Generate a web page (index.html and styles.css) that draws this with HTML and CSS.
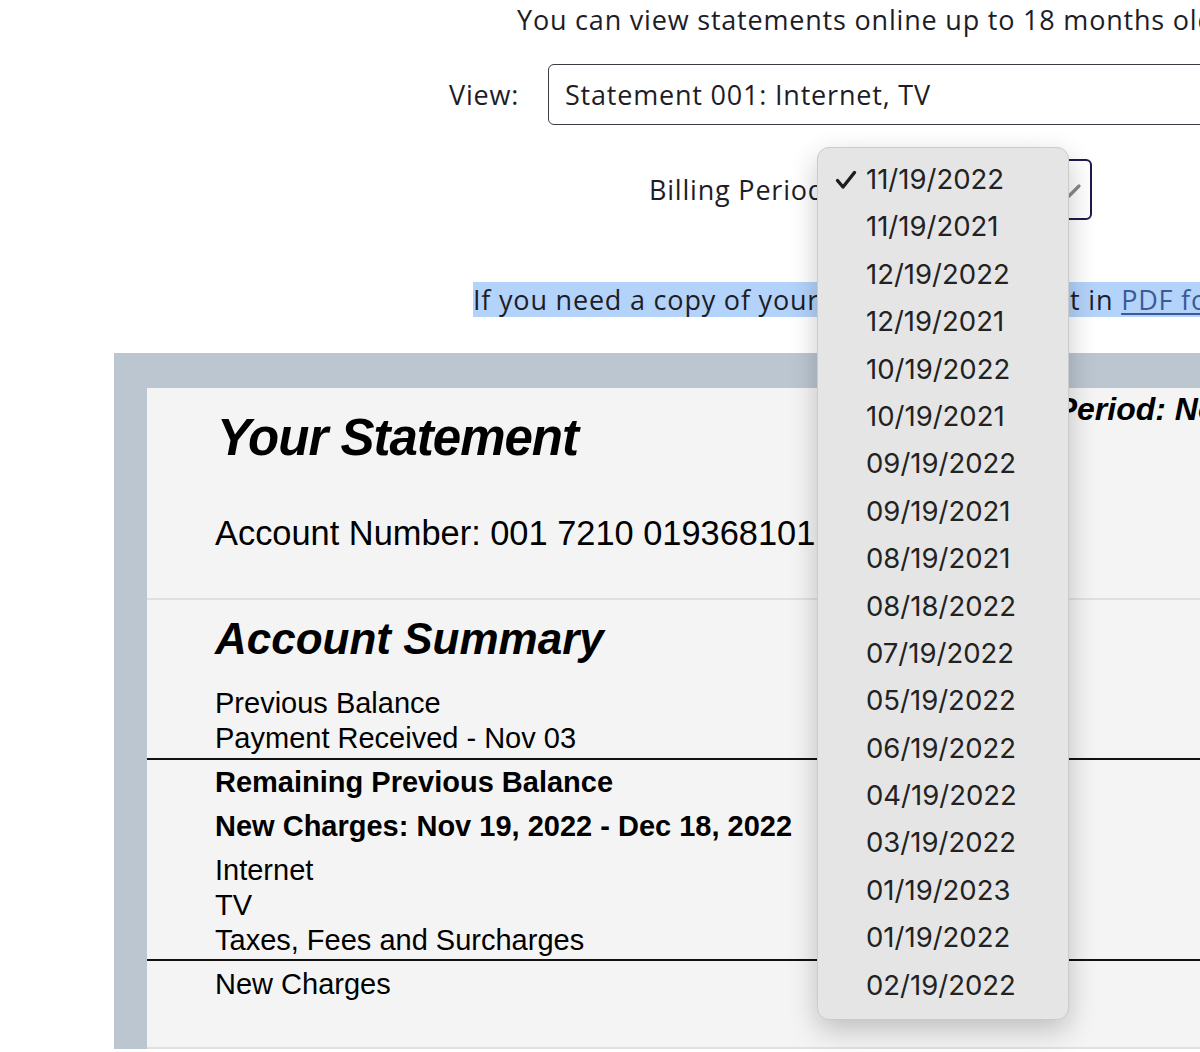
FILE: index.html
```html
<!DOCTYPE html>
<html lang="en">
<head>
    <meta charset="UTF-8">
    <meta name="viewport" content="width=device-width, initial-scale=1.0">
    <title>Statements</title>
    <link rel="stylesheet" href="styles.css">
</head>
<body>
    <div class="page">
        <div class="controls">
            <p class="notice">You can view statements online up to 18 months old. Older statements are available on request.</p>

            <div class="field field-view">
                <label>View:</label>
                <div class="select select-view">Statement 001: Internet, TV</div>
            </div>

            <div class="field field-period">
                <label>Billing Period:</label>
                <div class="select select-period">
                    <span>11/19/2022</span>
                    <svg class="chevron" width="26" height="16" viewBox="0 0 26 16">
                        <path d="M3 3 L13 13 L23 3" fill="none" stroke="#8a8a8a" stroke-width="3.2" stroke-linecap="round" stroke-linejoin="round"/>
                    </svg>
                </div>
            </div>

            <p class="pdf-note"><span class="picked">If you need a copy of your monthly statement in <a href="#">PDF format</a>, select the billing period above.</span></p>
        </div>

        <div class="frame">
            <div class="sheet">
                <div class="sheet-head">
                    <div class="head-left">
                        <h1>Your Statement</h1>
                        <p class="account">Account Number: 001 7210 019368101</p>
                    </div>
                    <div class="head-right">
                        <h2>Billing Period: Nov 19, 2022 - Dec 18, 2022</h2>
                    </div>
                </div>

                <div class="summary">
                    <h2 class="summary-title">Account Summary</h2>

                    <div class="group group-prev">
                        <div class="row">Previous Balance</div>
                        <div class="row">Payment Received - Nov 03</div>
                    </div>
                    <div class="row row-bold row-remaining">Remaining Previous Balance</div>
                    <div class="row row-bold row-charges">New Charges: Nov 19, 2022 - Dec 18, 2022</div>
                    <div class="group group-items">
                        <div class="row">Internet</div>
                        <div class="row">TV</div>
                        <div class="row">Taxes, Fees and Surcharges</div>
                    </div>
                    <div class="group group-total">
                        <div class="row">New Charges</div>
                    </div>
                </div>
            </div>
        </div>
    </div>

    <!-- open billing period menu -->
    <ul class="menu">
        <li class="checked">
            <svg class="check" width="22" height="20" viewBox="0 0 22 20">
                <path d="M2.5 10.5 L8 17 L19.5 2.5" fill="none" stroke="#1e1e1e" stroke-width="3.4" stroke-linecap="round" stroke-linejoin="round"/>
            </svg>
            11/19/2022
        </li>
        <li>11/19/2021</li>
        <li>12/19/2022</li>
        <li>12/19/2021</li>
        <li>10/19/2022</li>
        <li>10/19/2021</li>
        <li>09/19/2022</li>
        <li>09/19/2021</li>
        <li>08/19/2021</li>
        <li>08/18/2022</li>
        <li>07/19/2022</li>
        <li>05/19/2022</li>
        <li>06/19/2022</li>
        <li>04/19/2022</li>
        <li>03/19/2022</li>
        <li>01/19/2023</li>
        <li>01/19/2022</li>
        <li>02/19/2022</li>
    </ul>
</body>
</html>
```

FILE: styles.css
```css
* {
    margin: 0;
    padding: 0;
    box-sizing: border-box;
}

body {
    background: #fff;
    overflow: hidden;
    width: 1200px;
    height: 1052px;
    position: relative;
}

.page {
    width: 1900px;
    white-space: nowrap;
}

/* top controls */
.controls {
    font-family: 'Open Sans', sans-serif;
    font-size: 27px;
    letter-spacing: 0.8px;
    color: #1d1d27;
}

.notice {
    line-height: 40px;
    padding-left: 517px;
}

.field {
    display: flex;
    align-items: center;
}

.field-view {
    margin-top: 24px;
    padding-left: 449px;
}

.field-view label {
    width: 99px;
}

.field-period {
    margin-top: 34px;
    padding-left: 649px;
}

.field-period label {
    width: 200px;
}

.select {
    height: 61px;
    border: 1.5px solid #3c3c44;
    border-radius: 6px;
    display: flex;
    align-items: center;
    padding: 0 16px;
}

.select-view {
    width: 900px;
}

.select-period {
    width: 243px;
    border: 2px solid #1f1b4f;
    justify-content: space-between;
    padding-right: 8px;
}

.chevron {
    margin-top: 2px;
}

.pdf-note {
    margin-top: 62px;
    padding-left: 473px;
    line-height: 35px;
}

.picked {
    background: #b4d3fa;
    display: inline-block;
    padding-right: 200px;
}

.pdf-note a {
    color: #3b5a97;
    text-decoration: underline;
    text-underline-offset: 3px;
    text-decoration-thickness: 1.5px;
}

/* statement */
.frame {
    margin-top: 36px;
    margin-left: 114px;
    width: 1300px;
    background: #bcc6d1;
    padding: 35px 0 0 33px;
}

.sheet {
    background: #f4f4f4;
    font-family: 'Liberation Sans', Arial, sans-serif;
    color: #000;
}

.sheet-head {
    display: grid;
    grid-template-columns: 802px auto;
    border-bottom: 2px solid #e0e0e0;
    height: 212px;
}

.head-left {
    padding: 22px 0 0 68px;
}

.head-left h1 {
    font-size: 51px;
    font-style: italic;
    font-weight: bold;
    line-height: 56px;
    letter-spacing: -1px;
    padding-left: 2px;
}

.account {
    margin-top: 47px;
    font-size: 34.4px;
    line-height: 40px;
}

.head-right {
    padding-top: 1px;
}

.head-right h2 {
    font-size: 32px;
    font-style: italic;
    font-weight: bold;
    line-height: 40px;
}

.summary {
    padding-top: 14px;
    border-bottom: 2px solid #e0e0e0;
}

.summary-title {
    padding-left: 68px;
    font-size: 44px;
    font-style: italic;
    font-weight: bold;
    line-height: 50px;
    margin-bottom: 22px;
}

.row {
    padding-left: 68px;
    font-size: 29px;
    line-height: 35px;
}

.row-bold {
    font-weight: bold;
}

.group-prev {
    padding-bottom: 2px;
    border-bottom: 2px solid #111;
}

.row-remaining {
    padding-top: 5px;
}

.row-charges {
    margin-top: 9px;
}

.group-items {
    margin-top: 9px;
    padding-bottom: 1px;
    border-bottom: 2px solid #111;
}

.group-total {
    padding-top: 6px;
    padding-bottom: 45px;
}

/* dropdown menu over the billing period select */
.menu {
    position: absolute;
    left: 817px;
    top: 147px;
    width: 252px;
    list-style: none;
    background: #e5e5e5;
    border: 1px solid #cbcbcb;
    border-radius: 12px;
    box-shadow: 0 10px 28px rgba(0, 0, 0, 0.22);
    padding: 8px 0 10px;
    font-family: 'Inter', sans-serif;
    font-size: 27.5px;
    color: #222;
}

.menu li {
    height: 47.4px;
    line-height: 47.4px;
    padding-left: 48px;
    position: relative;
}

.check {
    position: absolute;
    left: 17px;
    top: 14px;
}
```
